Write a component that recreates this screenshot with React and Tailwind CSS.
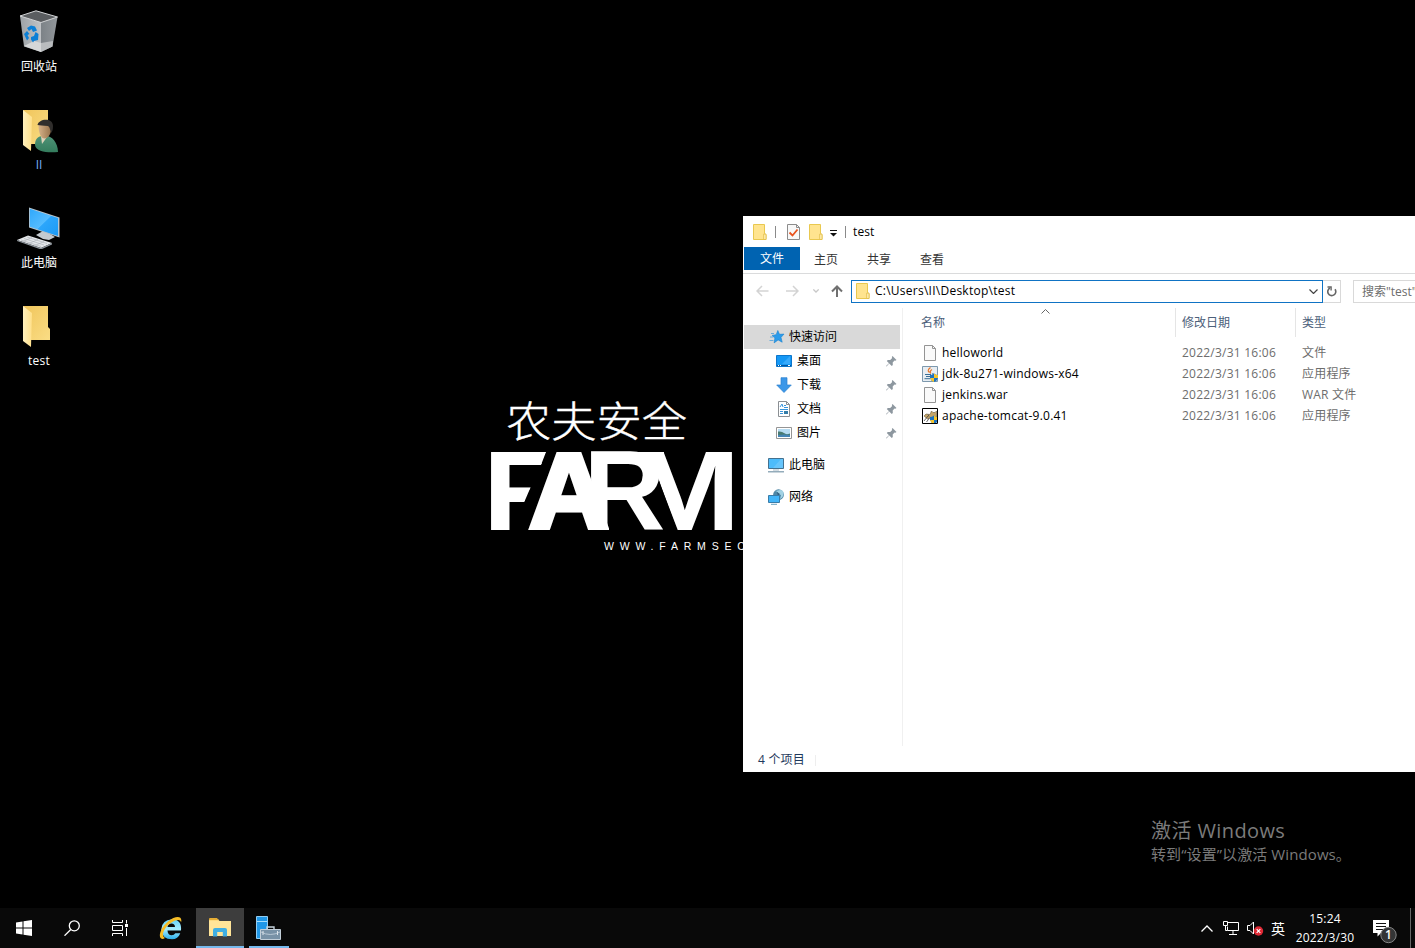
import React from 'react';

const Folder = ({ className }) => (
  <svg className={className} viewBox="0 0 14 16">
    <path d="M.5 .5h11v9l1.500 1v5H.5z" fill="#ffe48f" stroke="#e9c84f" />
    <path d="M10.700 15.500v-5.400h2.300v5.400z" fill="#fff0ba" stroke="#e2bd45" strokeWidth=".8" />
  </svg>
);

const OpenFolder = ({ className, person }) => (
  <svg className={className} viewBox="0 0 36 43">
    <defs>
      <linearGradient id="fb" x1="0" y1="0" x2="1" y2="1"><stop stopColor="#f0c55b" /><stop offset="1" stopColor="#fadd85" /></linearGradient>
      <linearGradient id="ff"><stop stopColor="#fff0bd" /><stop offset="1" stopColor="#ffe08a" /></linearGradient>
      <linearGradient id="green" x1="0" y1="0" x2="0" y2="1"><stop stopColor="#4f9377" /><stop offset="1" stopColor="#347c5d" /></linearGradient>
      <linearGradient id="skin"><stop stopColor="#d6b289" /><stop offset="1" stopColor="#957049" /></linearGradient>
    </defs>
    <path d={person ? 'M0 0h25v34H8z' : 'M0 0h25v21l2 2v11H8z'} fill="url(#fb)" />
    <path d="M0 0l9 7-1 34-8-6z" fill="url(#ff)" />
    {person && (
      <g>
        <path d="M12 35c0-6 3-9 8-9 7-2 15 5 15 16-10 1-22 0-23-7z" fill="url(#green)" />
        <path d="M18 26l1 8 5-7z" fill="#ddd3ba" />
        <path d="M15.500 15c0-4 13-4 13 2 0 6-3 11.500-7 11.500-4 0-6-6.500-6-13.500z" fill="url(#skin)" />
        <path d="M14.500 15c1-6.500 15.500-8 15.500 1 0 4-1 6-2 7-1-3-1-6-3-7-5 0-8-1-10.500-1z" fill="#302e2c" />
      </g>
    )}
  </svg>
);

const RecycleBin = ({ className }) => (
  <svg className={className} viewBox="0 0 40 43">
    <defs>
      <linearGradient id="binl"><stop stopColor="#9da2a6" /><stop offset="1" stopColor="#c0c3c6" /></linearGradient>
      <linearGradient id="binr"><stop stopColor="#7c8287" /><stop offset="1" stopColor="#92979b" /></linearGradient>
    </defs>
    <path d="M1 6L17 .8 38.500 7 22 12.500z" fill="#5a5d60" />
    <path d="M1 6l21 6.500V42L5 36.500z" fill="url(#binl)" />
    <path d="M38.500 7L22 12.500V42l11.500-5.500z" fill="url(#binr)" />
    <path d="M5 36l10-5 7 2v9z" fill="#d5d7d8" /><path d="M22 33l12-2-.5 5.500L22 42z" fill="#b9bcbe" />
    <path d="M1 6L17 .8 38.500 7 22 12.500z" fill="none" stroke="#d4d6d8" />
    <g fill="#0b7fd6">
      <path d="M8 18l4-2.500 4 1 2 4-4 1.500-1.500-3-2.500 2z" />
      <path d="M5 24l3-3 2.500 3-2 1 1.500 3-2 2.500z" />
      <path d="M12 27l3-1 1.500-4 3 2-.5 6-4 1-1 1.500-2-3z" />
    </g>
  </svg>
);

const BigPc = ({ className }) => (
  <svg className={className} viewBox="0 0 43 42">
    <defs><linearGradient id="scr" x1="0" y1="0" x2="1" y2="1"><stop stopColor="#2fa8fb" /><stop offset=".5" stopColor="#55bcff" /><stop offset=".52" stopColor="#2ca6fb" /><stop offset="1" stopColor="#1c9af5" /></linearGradient></defs>
    <path d="M26 24l-7 4 7 4 6 1 6-3-5-3z" fill="#c4cacf" />
    <path d="M12 .5l30.500 10v20L12 20.500z" fill="#b9c4cc" />
    <path d="M12.800 1.700L41 11v18L12.800 19.800z" fill="url(#scr)" />
    <path d="M0 33l11-4.500L35 36l-11 5z" fill="#e4e7ea" />
    <path d="M0 33l24 8 11-5v1.500L24 42.500 0 34z" fill="#8c949b" />
    <path d="M4 33l20 6.500M7 31.500l20 6.500M10 30l20 6.500M6 34.500l9-4M12 36.500l9-4M18 38.500l9-4" stroke="#a9afb5" strokeWidth=".6" />
  </svg>
);

const Pin = () => (
  <svg className="h-[11px] w-[11px]" viewBox="0 0 11 11">
    <path d="M6.500 0l4 4-1.200.8-.8-.2L6.700 6.500 6.800 9l-1 1-2.600-2.500L.5 10.500 0 10l3-2.700L.8 4.900l1-1 2.400.2L6.200 2l-.4-1z" fill="#8d979f" />
  </svg>
);

const StarIcon = () => (
  <svg className="h-4 w-4" viewBox="0 0 16 16">
    <path d="M8.800 1.500l1.700 3.800 4.500-.2-3 3.300 1.200 4.800-4.100-2.300-4 3 .8-4.800-2.800-2.700 4.100-.7z" fill="#2b9bea" stroke="#1781d0" strokeWidth=".6" />
    <path d="M2 4.500h3M1 8h3M.5 11.500h4" stroke="#4b9fdc" strokeWidth=".8" />
  </svg>
);
const DesktopIcon = () => (
  <svg className="h-4 w-4" viewBox="0 0 16 16">
    <path d="M.5 2.500h15v11H.5z" fill="#1598f5" stroke="#0d76cb" /><path d="M6 11L14 3v8z" fill="#37aafc" />
    <path d="M1 12.500h14" stroke="#04559e" /><path d="M2 12.500h1M4 12.500h1M12 12.500h2" stroke="#fff" />
  </svg>
);
const DownIcon = () => (
  <svg className="h-4 w-4" viewBox="0 0 16 16"><path d="M5 .7h6V8h4.300L8 15.500.7 8H5z" fill="#3b97e8" stroke="#2a7fce" strokeWidth=".7" /></svg>
);
const DocIcon = () => (
  <svg className="h-4 w-4" viewBox="0 0 16 16">
    <path d="M2.500.5h8l3 3v12h-11z" fill="#fff" stroke="#8b8f93" /><path d="M10.500.5v3h3" fill="none" stroke="#8b8f93" />
    <path d="M4 6l2-3 1 3M8 4.500h2M8 6.500h4M4 8.500h8M4 10.500h3M4 12.500h3" stroke="#3995dc" fill="none" /><path d="M8 10h4v3H8z" fill="#347da8" />
  </svg>
);
const PicIcon = () => (
  <svg className="h-4 w-4" viewBox="0 0 16 16">
    <path d="M.5 2.500h15v11H.5z" fill="#fff" stroke="#959595" /><path d="M2 4h12v8H2z" fill="#b7dcf2" />
    <path d="M2 6.500q4-.5 6 1.500t6 .5V11H2z" fill="#4a7b72" /><path d="M2 10q6-1 12 0v2H2z" fill="#4585b5" />
  </svg>
);
const PcIcon = () => (
  <svg className="h-4 w-4" viewBox="0 0 16 16">
    <path d="M.5 1.500h15v10H.5z" fill="#4dbcfb" stroke="#44718f" /><path d="M5 11L13 2h2v9z" fill="#7accfb" opacity=".6" />
    <path d="M5 13h6" stroke="#a8bac6" /><path d="M0 14.800h16" stroke="#7a98aa" strokeWidth="1.200" />
  </svg>
);
const NetIcon = () => (
  <svg className="h-4 w-4" viewBox="0 0 16 16">
    <circle cx="10.500" cy="5.700" r="5.400" fill="#4f87a6" /><path d="M7 2q4 1 3 3l3 1-1 4q3-1 3.500-5T12 1z" fill="#a2d2e4" /><path d="M9 3l3 2-2 2z" fill="#315e7e" />
    <path d="M.5 6.500h11v7H.5z" fill="#42b5f8" stroke="#397ca8" /><path d="M3 15.300h6" stroke="#6aa2bf" />
  </svg>
);

const BlankFile = () => (
  <svg className="h-4 w-4" viewBox="0 0 16 16"><path d="M2.500.5h8l3 3v12h-11z" fill="#fafafa" stroke="#949494" /><path d="M10.500.5v3h3" fill="none" stroke="#949494" /></svg>
);
const Shield = () => (
  <g>
    <path d="M8 9q2 0 4-1.500Q14 9 16 9v3q-1 3-4 4-3-1-4-4z" fill="#1b72bf" />
    <path d="M12 7.500Q14 9 16 9v3h-4zM8 12h4v4q-3-1-4-4z" fill="#f5c52c" />
  </g>
);
const JavaIcon = () => (
  <svg className="h-4 w-4" viewBox="0 0 16 16">
    <path d="M.5.5h15v15H.5z" fill="#e7edf2" stroke="#7d98ad" /><path d="M8.500 1.500q-4 3-1 5M10 3.500q-3 2-1 4" stroke="#e67427" strokeWidth="1.200" fill="none" />
    <path d="M3 8.500h6M4 10.500h5M2.500 12.700h6M10 8q3-1 1 2" stroke="#396e96" fill="none" /><Shield />
  </svg>
);
const TomcatIcon = () => (
  <svg className="h-4 w-4" viewBox="0 0 16 16">
    <path d="M0 0h16v16H0z" fill="#fff" />
    <path d="M2 8l2-2 4 .5L9.500 3l1.500 1.500h2L14.500 3v6l-3 2-4-1-2 1z" fill="#c5a467" stroke="#6d6042" strokeWidth=".6" />
    <path d="M2 13l4-5M4.500 14l3-4M6 6.500l1 2" stroke="#444" strokeWidth=".8" /><Shield />
    <path d="M.5.5h15v15H.5z" fill="none" stroke="#000" />
  </svg>
);

const desktopItems = [
  { label: '回收站', icon: <RecycleBin className="mt-[10px] h-[43px] w-10" />, cls: 'text-white' },
  { label: 'II', icon: <OpenFolder person className="ml-[3px] mt-[12px] h-[43px] w-9" />, cls: 'text-[#75b1ff]' },
  { label: '此电脑', icon: <BigPc className="mr-px mt-[11px] h-[42px] w-[43px]" />, cls: 'text-white' },
  { label: 'test', icon: <OpenFolder className="ml-[3px] mt-[12px] h-[43px] w-9" />, cls: 'text-white tracking-[0.2px]' },
];

const quick = [
  ['桌面', DesktopIcon],
  ['下载', DownIcon],
  ['文档', DocIcon],
  ['图片', PicIcon],
];

const files = [
  ['helloworld', '文件', BlankFile],
  ['jdk-8u271-windows-x64', '应用程序', JavaIcon],
  ['jenkins.war', 'WAR 文件', BlankFile],
  ['apache-tomcat-9.0.41', '应用程序', TomcatIcon],
];

function Wallpaper() {
  return (
    <svg className="absolute left-[480px] top-[390px] h-[170px] w-[270px]" viewBox="480 390 270 170" fill="#fff">
      <defs>
        <clipPath id="cf"><path d="M491 452h55l-5 13-9 19-6 14-14 32h-21z" /></clipPath>
        <clipPath id="ca"><path d="M520 452h71v11h18v67h-89z" /></clipPath>
        <clipPath id="cm"><path d="M649 452h91v78h-63l-20-55z" /></clipPath>
      </defs>
      <text transform="translate(506 437) scale(1 .94)" fontFamily="'Noto Sans CJK SC', sans-serif" fontWeight="300" fontSize="45" textLength="181" lengthAdjust="spacingAndGlyphs" stroke="#fff" strokeWidth=".4">农夫安全</text>
      <g fontFamily="'Liberation Sans', sans-serif" fontWeight="700" fontSize="113.400">
        <g clipPath="url(#cf)"><text x="484.500" y="530" stroke="#fff" strokeWidth="2">F</text></g>
        <g clipPath="url(#ca)"><text x="528" y="530" stroke="#fff" strokeWidth="5">A</text></g>
        <text x="583.500" y="530">R</text>
        <g clipPath="url(#cm)"><text transform="translate(628.500 530) scale(1.190 1)">M</text></g>
      </g>
      <path d="M630 452h34v20l-7 3q-3 12-16 15l3-22z" />
      <text x="604" y="550" fontFamily="'Liberation Sans', sans-serif" fontSize="10.500" letterSpacing="5.800">WWW.FARMSEC</text>
    </svg>
  );
}

function Explorer() {
  return (
    <section className="absolute left-[743px] top-[216px] flex h-[556px] w-[672px] flex-col overflow-hidden whitespace-nowrap bg-white text-xs text-black">
      <div className="flex h-[31px] shrink-0 items-center pl-[10px]">
        <Folder className="h-4 w-[14px]" />
        <i className="ml-[8px] h-3 w-px bg-[#8a8a8a]" />
        <svg className="ml-[11px] h-4 w-[13px]" viewBox="0 0 13 16"><path d="M.5.5h9l3 3v12H.5z" fill="#f8f8f8" stroke="#8c8c8c" /><path d="M9.500.5v3h3" fill="none" stroke="#8c8c8c" /><path d="M2.500 8.500l3 3 5-6" stroke="#e8531e" strokeWidth="1.800" fill="none" /></svg>
        <Folder className="ml-[9px] h-4 w-[14px]" />
        <svg className="ml-[7px] mt-1 h-[7px] w-[7px]" viewBox="0 0 7 7"><path d="M0 .5h7" stroke="#111" /><path d="M0 3h7L3.500 6.500z" fill="#111" /></svg>
        <i className="ml-[8px] h-3 w-px bg-[#8a8a8a]" />
        <span className="ml-[7px] tracking-[0.1px]">test</span>
      </div>
      <div className="flex h-[27px] shrink-0 border-b border-[#dadbdc] text-[#333]">
        <div className="ml-px h-[23px] w-14 bg-[#0063b1] text-center leading-[24px] text-white">文件</div>
        <div className="ml-[14px] leading-[25px]">主页</div>
        <div className="ml-[29px] leading-[25px]">共享</div>
        <div className="ml-[29px] leading-[25px]">查看</div>
      </div>
      <div className="flex h-[34px] shrink-0 items-center">
        <svg className="ml-[13px] h-3 w-[13px] shrink-0" viewBox="0 0 13 12" fill="none" stroke="#d3d3d3" strokeWidth="1.500"><path d="M12.500 6H1M6 1L1 6l5 5" /></svg>
        <svg className="ml-[17px] h-3 w-[13px] shrink-0" viewBox="0 0 13 12" fill="none" stroke="#d3d3d3" strokeWidth="1.500"><path d="M0 6h11.500M7 1l5 5-5 5" /></svg>
        <svg className="ml-[14px] h-1 w-[6px] shrink-0" viewBox="0 0 6 4" fill="none" stroke="#c8c8c8" strokeWidth="1.300"><path d="M.3.4L3 3 5.700.4" /></svg>
        <svg className="ml-[12px] h-3 w-3 shrink-0" viewBox="0 0 12 12" fill="none" stroke="#707070" strokeWidth="2"><path d="M6 12V1.500M1 6.500l5-5 5 5" /></svg>
        <div className="ml-[8px] flex h-[23px] w-[472px] shrink-0 items-center border border-[#0f73c4] pl-1 pr-1">
          <Folder className="h-4 w-[14px]" />
          <span className="ml-[5px] tracking-[0.25px]">C:\Users\II\Desktop\test</span>
          <svg className="ml-auto h-[5px] w-[9px]" viewBox="0 0 9 5" fill="none" stroke="#444" strokeWidth="1.200"><path d="M.5.5l4 4 4-4" /></svg>
        </div>
        <div className="flex h-[23px] w-[18px] shrink-0 items-center justify-center border border-l-0 border-[#d9d9d9]">
          <svg className="ml-px h-[11px] w-[10px]" viewBox="0 0 10 11" fill="none" stroke="#666" strokeWidth="1.600"><path d="M3 2a4 4 0 1 0 5 1.200" /><path d="M.5 1h3.600v3.600" strokeWidth="1.400" /></svg>
        </div>
        <div className="ml-[12px] h-[23px] w-[180px] shrink-0 border border-[#d9d9d9] pl-[8px] leading-[21px] text-[#6d6d6d]">搜索"test"</div>
      </div>
      <div className="flex min-h-0 flex-1">
        <nav className="flex w-[160px] shrink-0 flex-col border-r border-[#f0f0f0] pt-[17px]">
          <div className="ml-px flex h-6 w-[156px] items-center bg-[#d9d9d9] pl-[25px]"><StarIcon /><span className="ml-1">快速访问</span></div>
          {quick.map(([name, Icon]) => (
            <div key={name} className="flex h-6 items-center pl-[33px] pr-[5px]"><Icon /><span className="ml-[5px]">{name}</span><span className="ml-auto"><Pin /></span></div>
          ))}
          <div className="mt-2 flex h-6 items-center pl-[25px]"><PcIcon /><span className="ml-[5px]">此电脑</span></div>
          <div className="mt-2 flex h-6 items-center pl-[25px]"><NetIcon /><span className="ml-[5px]">网络</span></div>
        </nav>
        <div className="min-w-0 flex-1">
          <div className="flex h-[29px] text-[#4c607a]">
            <div className="flex w-[272px] shrink-0 justify-between pl-[18px]">
              <span className="leading-[29px]">名称</span>
              <svg className="mr-[125px] mt-[1px] h-[5px] w-[9px]" viewBox="0 0 9 5" fill="none" stroke="#666"><path d="M.5 4.500l4-4 4 4" /></svg>
            </div>
            <div className="w-[120px] shrink-0 border-l border-[#e5e5e5] pl-[6px] leading-[29px]">修改日期</div>
            <div className="w-[120px] shrink-0 border-l border-[#e5e5e5] pl-[6px] leading-[29px]">类型</div>
          </div>
          <div className="pt-[5px]">
            {files.map(([name, type, Icon]) => (
              <div key={name} className="flex h-[21px] items-center pl-[19px]">
                <div className="flex w-[260px] shrink-0 items-center"><Icon /><span className="ml-1 tracking-[0.22px]">{name}</span></div>
                <span className="w-[120px] shrink-0 tracking-[0.23px] text-[#6d6d6d]">2022/3/31 16:06</span>
                <span className="tracking-[0.2px] text-[#6d6d6d]">{type}</span>
              </div>
            ))}
          </div>
        </div>
      </div>
      <div className="flex h-[26px] shrink-0 items-center pl-[15px] pt-[2px] tracking-[0.2px] text-[#1e395b]">4 个项目<i className="ml-[10px] h-[11px] w-px bg-[#eee]" /></div>
    </section>
  );
}

function Taskbar() {
  return (
    <footer className="flex h-10 w-full items-center bg-[#090909] text-white">
      <div className="flex w-12 justify-center">
        <svg className="h-4 w-4" viewBox="0 0 16 16" fill="#fff"><path d="M0 2.500L6.500 1.500v6H0zM7.500 1.300L16 0v7.500H7.500zM0 8.500h6.500v6L0 13.600zM7.500 8.500H16V16l-8.500-1.200z" /></svg>
      </div>
      <div className="flex w-12 justify-center">
        <svg className="h-4 w-4" viewBox="0 0 16 16" fill="none" stroke="#fff" strokeWidth="1.300"><circle cx="10.300" cy="5.800" r="5" /><path d="M6.800 9.500L.5 15.700" /></svg>
      </div>
      <div className="flex w-12 justify-center">
        <svg className="h-4 w-4" viewBox="0 0 16 16" fill="none" stroke="#fff"><path d="M.5 0v2.500h10V0M.5 5.500h10v5H.5zM.5 16v-2.500h10V16M14.500 0v3.500M14.500 8v8" /><path d="M13 4h3v3h-3z" fill="#fff" stroke="none" /></svg>
      </div>
      <div className="flex w-[52px] justify-center">
        <svg className="h-[23px] w-[23px]" viewBox="0 0 23 23" fill="none">
          <defs><linearGradient id="ie" x1="0" y1="0" x2="0" y2="1"><stop stopColor="#62d3fb" /><stop offset=".5" stopColor="#a7edff" /><stop offset="1" stopColor="#2baeea" /></linearGradient></defs>
          <path d="M8.500 13.500h13.500q1-11-9-11.300Q2.500 3 2.300 12.500 3 22.300 13 22.300q6 0 8.300-6h-5q-1.200 2-3.600 2-4-.3-4.200-4.800M8.500 10q.6-3.600 4-3.600T16 10z" fill="url(#ie)" fillRule="evenodd" />
          <path d="M4 22C-2 22 1 11 9 4.500S24-1 22 5.500C22 2 17 2 11 6.500S1.500 19 6 21z" fill="#f6bd27" />
        </svg>
      </div>
      <div className="flex h-10 w-12 items-center justify-center border-b-2 border-[#76b9ed] bg-[#3d3d3d]">
        <svg className="mt-[1px] h-[19px] w-[22px]" viewBox="0 0 22 19"><path d="M0 1h9l1.500 2H22v15H0z" fill="#fbd980" /><path d="M0 1q0-1 1-1h7l1.500 2H0z" fill="#e5ad35" /><path d="M0 3h22v15H0z" fill="#ffe498" /><path d="M4 18.500v-6.500q0-2 2-2h10q2 0 2 2v6.500h-4.200v-4.500H8.200v4.500z" fill="#3faee2" /></svg>
      </div>
      <div className="ml-[5px] flex h-10 w-10 items-center justify-center border-b-2 border-[#76b9ed]">
        <svg className="mr-px mt-px h-6 w-[25px]" viewBox="0 0 25 24"><path d="M.5.5h11v22H.5z" fill="#2097e7" stroke="#91cdf3" /><path d="M1 5.500h10" stroke="#a5ddfc" /><path d="M11 13v-2h7v2" fill="none" stroke="#c6d3dd" strokeWidth="1.400" /><path d="M4.500 13.500h20v10h-20z" fill="#7892a7" stroke="#c2ced8" /><path d="M5 16q9 5 19 0" fill="none" stroke="#b8c8d5" /><path d="M7 15v4M21.500 15v4" stroke="#dae3ea" /></svg>
      </div>
      <div className="ml-auto flex h-10 items-center text-xs">
        <svg className="h-[7px] w-3" viewBox="0 0 12 7" fill="none" stroke="#fff" strokeWidth="1.300"><path d="M.5 6.500L6 1l5.500 5.500" /></svg>
        <svg className="ml-[10px] h-[14px] w-4" viewBox="0 0 16 14" fill="none" stroke="#fff"><path d="M5 1.500h10.500v8H4.500V5.500M10 9.500v4M6 13.500h8M.5.500h4v4h-4zM2.500 4.500v5h2" /></svg>
        <svg className="ml-2 h-4 w-[17px]" viewBox="0 0 17 16" fill="none" stroke="#fff"><path d="M.5 5.500H3L6.500 2v12L3 10.500H.5z" /><circle cx="11.500" cy="11" r="4.700" fill="#df2935" stroke="none" /><path d="M9.700 9.200l3.600 3.600M13.300 9.200l-3.600 3.600" strokeWidth="1.200" /></svg>
        <span className="ml-[7px] mt-px text-[14px] leading-5">英</span>
        <div className="ml-[10px] w-[60px] whitespace-nowrap text-center leading-[19px] tracking-[0.2px]"><div>15:24</div><div>2022/3/30</div></div>
        <div className="relative ml-[18px] mt-[4px] h-6 w-6">
          <svg className="h-6 w-6 overflow-visible" viewBox="0 0 24 24"><path d="M0 2h16v13H8l-3.500 3.500V15H0z" fill="#fff" /><path d="M3 5.500h10M3 8.500h10M3 11.500h7" stroke="#111" /><circle cx="15.500" cy="17" r="7.700" fill="#343536" stroke="#858585" /></svg>
          <span className="absolute left-[12px] top-[9px] text-[12px] font-semibold leading-4">1</span>
        </div>
        <i className="ml-[13px] h-10 w-px bg-[#666]" />
        <i className="w-1" />
      </div>
    </footer>
  );
}

export default function App() {
  return (
    <div className="relative flex h-[948px] w-[1415px] flex-col overflow-hidden bg-black font-['Open_Sans','Noto_Sans_CJK_SC',sans-serif]">
      <Wallpaper />
      <main className="flex-1">
        <div className="flex w-[78px] flex-col">
          {desktopItems.map(({ label, icon, cls }) => (
            <div key={label} className="flex h-[98px] flex-col items-center">
              <div className="flex h-[58px] shrink-0 items-start">{icon}</div>
              <span className={`text-xs leading-[18px] ${cls}`}>{label}</span>
            </div>
          ))}
        </div>
      </main>
      <Explorer />
      <div className="absolute left-[1151px] top-[817px] whitespace-nowrap text-[#7b7b7b]">
        <div className="text-[20px] leading-[27px] tracking-[0.4px]">激活 Windows</div>
        <div className="text-[15px] leading-[21px] tracking-[0.1px]">转到“设置”以激活 Windows。</div>
      </div>
      <Taskbar />
    </div>
  );
}
